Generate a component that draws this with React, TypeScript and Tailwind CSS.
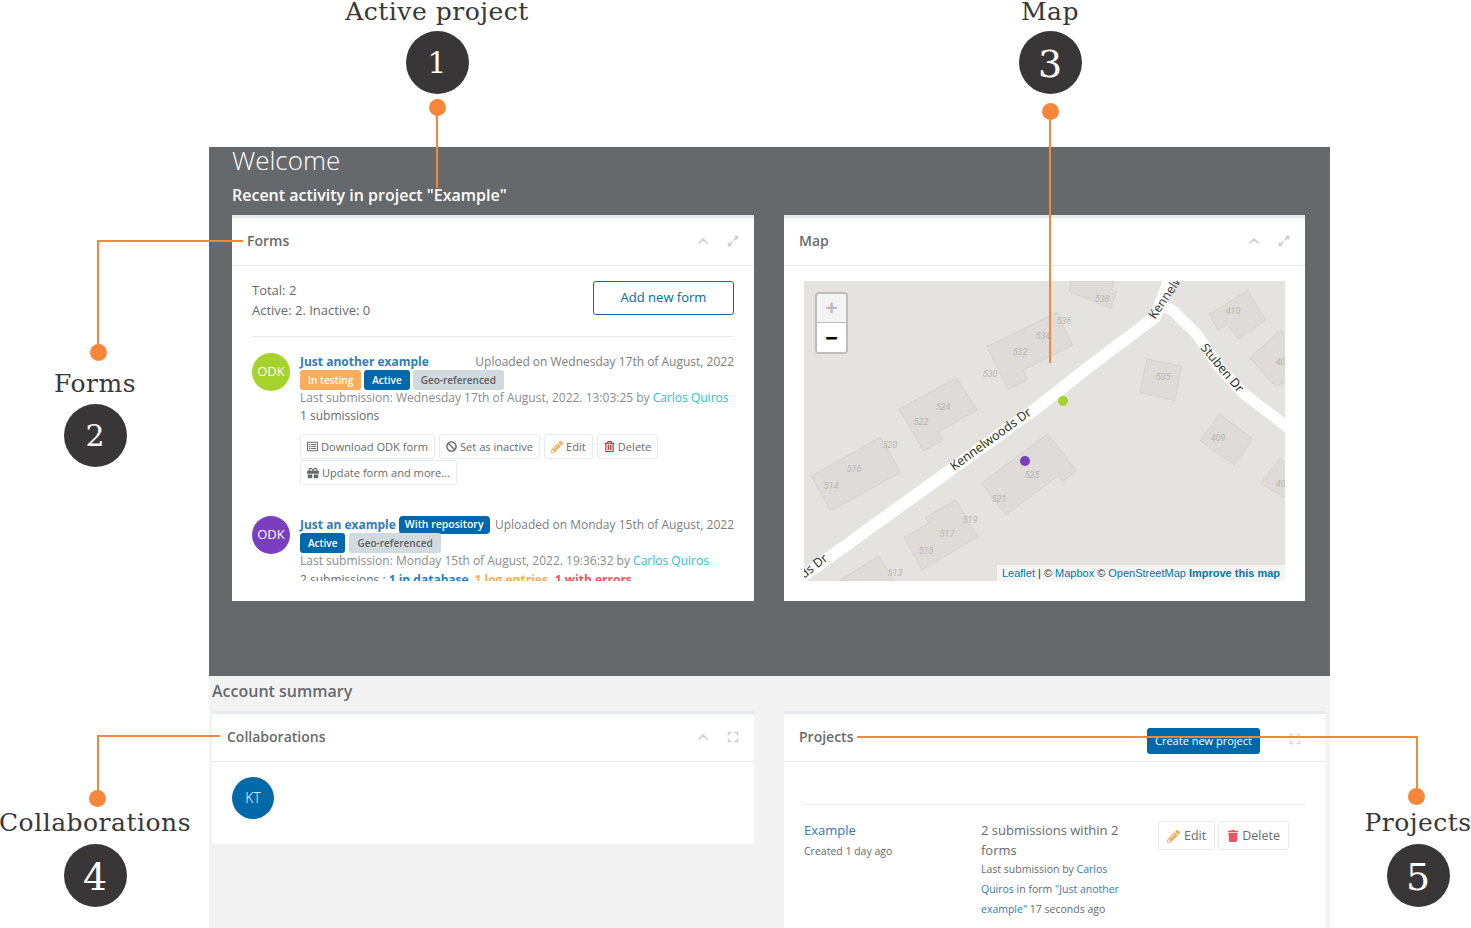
import { FaBan, FaExpand, FaExpandAlt, FaGift, FaPencilAlt, FaTrash, FaRegTrashAlt, FaRegListAlt } from "react-icons/fa";
import { ChevronUp } from "lucide-react";
import React from "react";

function PanelTools({ wide }: { wide?: boolean }) {
  return (
    <div className="flex items-center gap-[16px] text-[#c9cccf]">
      <ChevronUp size={16} strokeWidth={2.5} />
      {wide ? <FaExpand size={12} /> : <FaExpandAlt size={12} />}
    </div>
  );
}

function Panel({ title, wide, className, children }: { title: string; wide?: boolean; className: string; children: React.ReactNode }) {
  return (
    <section className={`flex flex-col border-t-[3px] border-[#e7eaec] bg-white ${className}`}>
      <header className="flex h-[48px] shrink-0 items-center justify-between border-b border-[#e7eaec] pb-[2px] pl-[15px] pr-[15px]">
        <h3 className="text-[14px] font-semibold text-[#676a6c]">{title}</h3>
        <PanelTools wide={wide} />
      </header>
      {children}
    </section>
  );
}

function Tag({ color, children }: { color: string; children: React.ReactNode }) {
  return <span className={`inline-block whitespace-nowrap rounded-[3px] text-[10px] font-semibold ${color}`}>{children}</span>;
}

function ActionButton({ icon, children }: { icon: React.ReactNode; children: React.ReactNode }) {
  return (
    <button className="flex h-[25px] items-center gap-[3px] rounded-[3px] border border-[#e7eaec] bg-white px-[6px] text-[11.1px] text-[#676a6c]">
      {icon}
      {children}
    </button>
  );
}

function Buildings() {
  const shapes = [
    "1066.7,281 1065.3,291.7 1106,308.3 1112,291.7 1106.7,289.3 1110,281",
    "984,346.7 1053.3,312.3 1068.3,345 1020,370 1024,380 1005,389",
    "897.3,409.3 954,378 974.3,410 936,432.3 940.7,440 921.7,451",
    "810.7,476 879,437.3 899,472.3 830,511",
    "978.7,483.3 1044,433.7 1072.3,471 1058.3,481.7 1054,476 1002.7,515",
    "902.3,537.3 926.7,523.3 923.3,517.3 953.3,500 975.3,536.7 920,570",
    "838.3,581 877.3,556 892.7,581",
    "1141.7,359 1176,366 1169.3,400.7 1135,392.7",
    "1203.3,314.7 1240.7,290 1259.3,320 1231.7,339.3 1221.7,324.3 1211.7,330",
    "1243.3,358.3 1273.3,330 1285,340 1285,380 1268,386",
    "1194.3,440.7 1213.3,414 1246,439 1227.7,465",
    "1254,483.3 1272.7,458.7 1285,468 1285,503",
  ];
  return (
    <g transform="translate(780 0) scale(1.0142 1) translate(-780 0)">
      {shapes.map((points) => (
        <polygon key={points} points={points} fill="#dedbd8" stroke="#d0cdc9" strokeWidth="0.7" />
      ))}
    </g>
  );
}

const houseNumbers: [string, number, number][] = [
  ["538", 1102, 302], ["536", 1064, 324], ["534", 1043, 339], ["532", 1020, 355], ["530", 990, 377],
  ["524", 943, 410], ["522", 921, 425], ["520", 890, 448], ["516", 854, 472], ["514", 831, 489],
  ["525", 1032, 478], ["521", 999, 502], ["519", 970, 523], ["517", 947, 537], ["515", 926, 554],
  ["513", 895, 576], ["535", 1163, 380], ["410", 1233, 314], ["408", 1283, 365], ["409", 1218, 441], ["407", 1283, 487],
];

function MapView() {
  return (
    <div className="relative h-[300px] w-[481px] overflow-hidden bg-[#e4e3e0]">
      <svg viewBox="804 281 481 300" className="h-full w-full">
        <Buildings />
        <path d="M795 582 L1034 410 L1094 363 L1155 317 L1171 276" fill="none" stroke="#fff" strokeWidth="12" />
        <path d="M1160 305 L1172 310 L1196 333 L1219 367 L1243 393 L1295 433" fill="none" stroke="#fff" strokeWidth="11" />
        {houseNumbers.map(([label, x, y]) => (
          <text key={label} x={x} y={y} textAnchor="middle" fontSize="9" fontStyle="italic" fill="#b9b6b2" fontFamily="Roboto, sans-serif">
            {label}
          </text>
        ))}
        <g fontFamily="'Noto Sans', sans-serif" fontSize="12.5" fill="#333">
          <text transform="translate(954 471) rotate(-36)">Kennelwoods Dr</text>
          <text transform="translate(1155 320) rotate(-56)">Kennelwoods</text>
          <text transform="translate(1200 348) rotate(50)">Stuben Dr</text>
          <text transform="translate(804 579) rotate(-38)">ds Dr</text>
        </g>
        <circle cx="1063" cy="401" r="5" fill="#a5d22b" />
        <circle cx="1025" cy="461" r="5" fill="#7a3fbf" />
      </svg>
      <div className="absolute left-[11px] top-[11px] w-[33px] overflow-hidden rounded-[4px] border-2 border-[#bdbdbb] text-center">
        <div className="flex h-[29px] items-center justify-center border-b border-[#bbb] bg-[#f4f4f4] pb-[3px] text-[22px] font-bold text-[#bbb]">+</div>
        <div className="flex h-[29px] items-center justify-center bg-white text-[22px] font-bold text-black">−</div>
      </div>
      <div className="absolute bottom-0 right-0 flex h-[16px] items-center gap-[3px] bg-[#f6f5f4] pl-[5px] pr-[5px] font-['Liberation_Sans',sans-serif] text-[11px] text-[#333]">
        <span className="text-[#0078a8]">Leaflet</span> | © <span className="text-[#0078a8]">Mapbox</span> © <span className="text-[#0078a8]">OpenStreetMap</span>
        <b className="text-[#0078a8]">Improve this map</b>
      </div>
    </div>
  );
}

function FormsBody() {
  return (
    <div className="h-[315px] overflow-hidden px-[20px] pt-[15px] text-[12px] leading-[20px] text-[#676a6c]">
      <div className="flex items-start justify-between border-b border-[#e7eaec] pb-[16px]">
        <div className="-mt-[1px] text-[13px]">
          <p>Total: 2</p>
          <p>Active: 2. Inactive: 0</p>
        </div>
        <button className="h-[34px] w-[141px] rounded-[3px] border border-[#0169aa] pb-[2px] text-[13px] text-[#0169aa]">Add new form</button>
      </div>
      <article className="mt-[16px] flex gap-[10px]">
        <div className="flex h-[38px] w-[38px] shrink-0 items-center justify-center rounded-full bg-[#a5d22b] pb-[2px] text-[13px] text-white">ODK</div>
        <div className="min-w-0 flex-1">
          <div className="flex h-[17px] items-center justify-between whitespace-nowrap leading-[17px]">
            <a className="font-bold text-[#337ab7]">Just another example</a>
            <span className="text-[#7b7e80]">Uploaded on Wednesday 17th of August, 2022</span>
          </div>
          <div className="flex h-[20px] gap-[3px] leading-[20px]">
            <Tag color="bg-[#f9ad5f] px-[8px] text-white">In testing</Tag>
            <Tag color="bg-[#0169aa] px-[8px] text-white">Active</Tag>
            <Tag color="bg-[#d1dade] px-[8px] text-[#5e5e5e]">Geo-referenced</Tag>
          </div>
          <p className="h-[15px] whitespace-nowrap leading-[15px] text-[#8a8c8e]">Last submission: Wednesday 17th of August, 2022. 13:03:25 by <span className="text-[#23c6c8]">Carlos Quiros</span></p>
          <p className="mt-[1px]">1 submissions</p>
          <div className="mt-[8px] flex flex-wrap gap-x-[4px] gap-y-[1px]">
            <ActionButton icon={<FaRegListAlt size={11} />}>Download ODK form</ActionButton>
            <ActionButton icon={<FaBan size={11} />}>Set as inactive</ActionButton>
            <ActionButton icon={<FaPencilAlt size={12} className="text-[#f8ac59]" />}>Edit</ActionButton>
            <ActionButton icon={<FaRegTrashAlt size={11} className="text-[#e8001c]" />}>Delete</ActionButton>
            <ActionButton icon={<FaGift size={12} />}>Update form and more...</ActionButton>
          </div>
        </div>
      </article>
      <article className="mt-[31px] flex gap-[10px]">
        <div className="flex h-[38px] w-[38px] shrink-0 items-center justify-center rounded-full bg-[#7a3fbf] pb-[2px] text-[13px] text-white">ODK</div>
        <div className="min-w-0 flex-1">
          <div className="flex h-[17px] items-center whitespace-nowrap leading-[17px]">
            <a className="font-bold text-[#337ab7]">Just an example</a>
            <span className="ml-[3px] flex h-[18px] items-center rounded-[4px] bg-[#0169aa] px-[6px] text-[10.5px] font-semibold text-white">With repository</span>
            <span className="ml-auto text-[#7b7e80]">Uploaded on Monday 15th of August, 2022</span>
          </div>
          <div className="flex h-[20px] gap-[4px] leading-[20px]">
            <Tag color="bg-[#0169aa] px-[8px] text-white">Active</Tag>
            <Tag color="bg-[#d1dade] px-[8px] text-[#5e5e5e]">Geo-referenced</Tag>
          </div>
          <p className="h-[15px] whitespace-nowrap leading-[15px] text-[#8a8c8e]">Last submission: Monday 15th of August, 2022. 19:36:32 by <span className="text-[#23c6c8]">Carlos Quiros</span></p>
          <p className="mt-[2px] whitespace-nowrap">
            2 submissions : <b className="text-[#1c84c6]">1 in database</b>
            <b className="ml-[6px] text-[#f8ac59]">1 log entries</b>
            <b className="ml-[7px] text-[#ed5565]">1 with errors</b>
          </p>
        </div>
      </article>
    </div>
  );
}

function ProjectsBody() {
  return (
    <div className="px-[20px] pt-[42px] text-[#676a6c]">
      <div className="flex border-t border-[#e7eaec] pt-[15px]">
        <div className="w-[177px] shrink-0">
          <a className="block text-[13px] leading-[20px] text-[#337ab7]">Example</a>
          <p className="mt-[1px] text-[10.5px] leading-[20px]">Created 1 day ago</p>
        </div>
        <div className="w-[151px] shrink-0 text-[10.5px] leading-[19.8px]">
          <p className="text-[13px] leading-[20px]">2 submissions within 2 forms</p>
          <p>
            Last submission by <span className="text-[#337ab7]">Carlos Quiros</span> in form <span className="text-[#337ab7]">"Just another example"</span> 17 seconds ago
          </p>
        </div>
        <div className="ml-[26px] mt-[1px] flex h-[29px] gap-[3px]">
          <button className="flex items-center gap-[4px] rounded-[3px] border border-[#e7eaec] px-[8px] pt-[1px] text-[12.5px]"><FaPencilAlt size={13} className="text-[#f8ac59]" />Edit</button>
          <button className="flex items-center gap-[3px] rounded-[3px] border border-[#e7eaec] px-[8px] pt-[1px] text-[12.5px]"><FaTrash size={12} className="text-[#ed5565]" />Delete</button>
        </div>
      </div>
    </div>
  );
}

function Callout({ label, number, className, numberClass }: { label: string; number: string; className: string; numberClass: string }) {
  return (
    <div className={`absolute flex w-[220px] flex-col items-center font-['DejaVu_Serif',serif] text-[#3a3737] ${className}`}>
      <span className="text-[25px] leading-[30px] tracking-[0.5px]">{label}</span>
      <span className={`flex h-[63px] w-[63px] items-center justify-center rounded-full bg-[#393637] text-white ${numberClass}`}>{number}</span>
    </div>
  );
}

function Leader({ className }: { className: string }) {
  return <div className={`absolute bg-[#f6873a] ${className}`} />;
}

export default function App() {
  return (
    <div className="relative h-[928px] w-[1471px] overflow-hidden bg-white font-['Open_Sans',sans-serif]">
      <div className="pt-[147px] pl-[209px]">
        <main className="h-[781px] w-[1121px] bg-[#f3f3f4]">
          <div className="h-[529px] bg-[#65696c] px-[23px]">
            <h1 className="text-[26px] font-light leading-[26px] text-white">Welcome</h1>
            <h2 className="mt-[12px] h-[30px] text-[16px] font-semibold leading-[20px] text-white">Recent activity in project "Example"</h2>
            <div className="flex gap-[30px]">
              <Panel title="Forms" className="h-[386px] w-[522px]">
                <FormsBody />
              </Panel>
              <Panel title="Map" className="h-[386px] w-[521px]">
                <div className="px-[20px] pt-[15px]">
                  <MapView />
                </div>
              </Panel>
            </div>
          </div>
          <h2 className="pl-[3px] pt-[5px] text-[16px] font-semibold leading-[20px] text-[#676a6c]">Account summary</h2>
          <div className="mt-[10px] flex pl-[3px]">
            <Panel title="Collaborations" wide className="h-[133px] w-[542px]">
              <div className="pl-[20px] pt-[15px]">
                <div className="flex h-[42px] w-[42px] items-center justify-center rounded-full bg-[#0169aa] pb-[2px] text-[14px] font-light text-white">KT</div>
              </div>
            </Panel>
            <div className="ml-[30px] h-[217px] w-[541px] overflow-hidden">
              <section className="h-full border-t-[3px] border-[#e7eaec] bg-white">
                <header className="flex h-[48px] items-center justify-between border-b border-[#e7eaec] pb-[2px] pl-[15px] pr-[24px]">
                  <h3 className="text-[14px] font-semibold text-[#676a6c]">Projects</h3>
                  <div className="flex items-center gap-[29px] pt-[9px]">
                    <button className="h-[26px] w-[113px] rounded-[3px] bg-[#0169aa] pt-[1px] text-[11px] text-white">Create new project</button>
                    <FaExpand size={12} className="mb-[4px] text-[#d6d8da]" />
                  </div>
                </header>
                <ProjectsBody />
              </section>
            </div>
          </div>
        </main>
      </div>

      <Callout label="Active project" number="1" className="left-[327px] top-[-3px]" numberClass="mt-[4px] text-[30px]" />
      <Callout label="Map" number="3" className="left-[940px] top-[-3px]" numberClass="mt-[4px] pt-[4px] text-[38px]" />
      <Callout label="Forms" number="2" className="left-[-15px] top-[369px]" numberClass="mt-[5px] text-[30px]" />
      <Callout label="Collaborations" number="4" className="left-[-15px] top-[808px]" numberClass="mt-[6px] pt-[4px] text-[38px]" />
      <Callout label="Projects" number="5" className="left-[1308px] top-[808px]" numberClass="mt-[6px] pt-[4px] text-[38px]" />

      <Leader className="left-[429px] top-[99px] h-[17px] w-[17px] rounded-full" />
      <Leader className="left-[436px] top-[108px] h-[80px] w-[2px]" />
      <Leader className="left-[1042px] top-[103px] h-[17px] w-[17px] rounded-full" />
      <Leader className="left-[1049px] top-[112px] h-[251px] w-[2px]" />
      <Leader className="left-[90px] top-[344px] h-[17px] w-[17px] rounded-full" />
      <Leader className="left-[97px] top-[240px] h-[105px] w-[2px]" />
      <Leader className="left-[97px] top-[240px] h-[2px] w-[146px]" />
      <Leader className="left-[89px] top-[790px] h-[17px] w-[17px] rounded-full" />
      <Leader className="left-[97px] top-[735px] h-[57px] w-[2px]" />
      <Leader className="left-[97px] top-[735px] h-[2px] w-[123px]" />
      <Leader className="left-[1408px] top-[788px] h-[17px] w-[17px] rounded-full" />
      <Leader className="left-[1416px] top-[736px] h-[54px] w-[2px]" />
      <Leader className="left-[857px] top-[736px] h-[2px] w-[561px]" />
    </div>
  );
}
